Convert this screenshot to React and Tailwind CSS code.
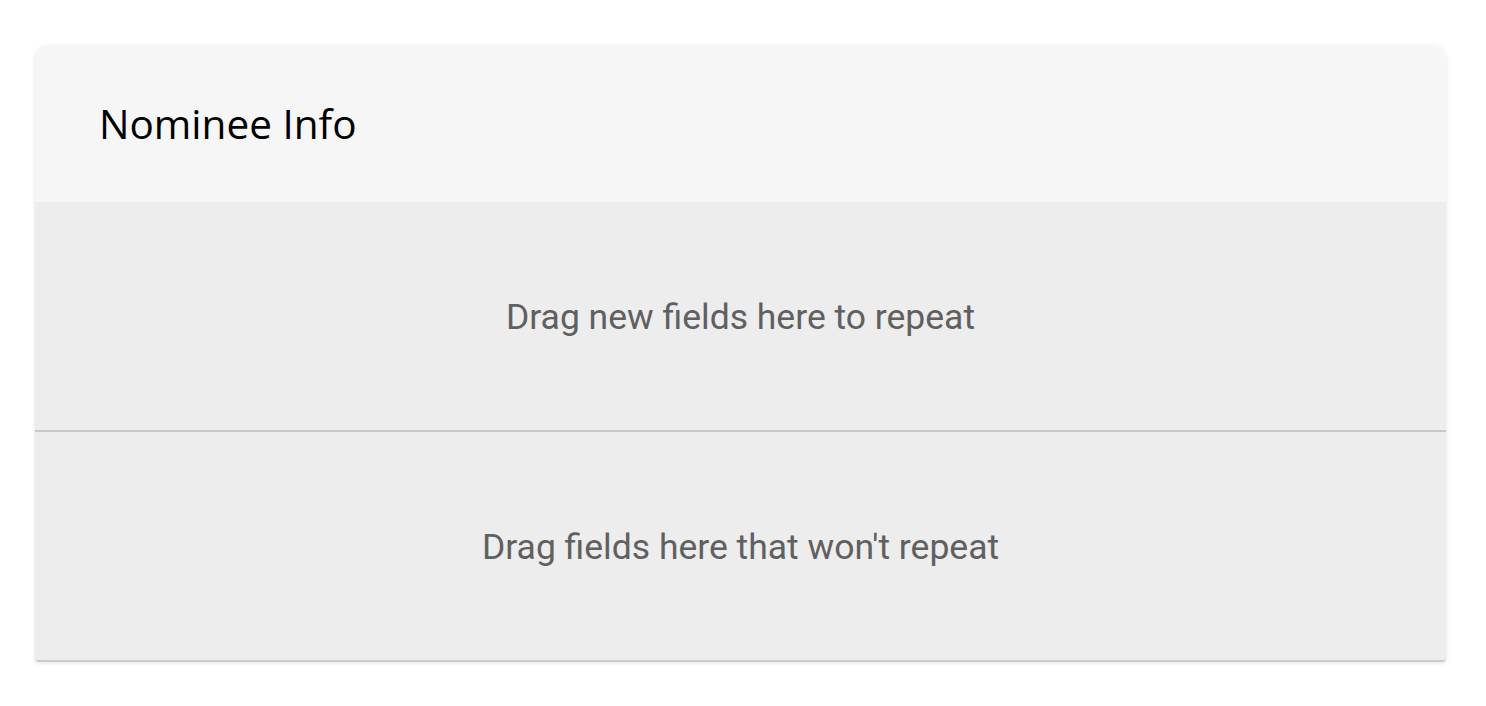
export default function App() {
  return (
    <div className="min-h-screen bg-white pt-[45px] pl-[35px] pr-[40px]">
      <div className="w-[1411px] rounded-t-[14px] rounded-b-[4px] overflow-hidden shadow-[0_1px_4px_rgba(0,0,0,0.12)] border-b-2 border-[#cbcbcb]">
        {/* Header */}
        <div className="h-[157px] bg-[#f6f6f6] flex items-center pl-[64px] pt-[2px]">
          <h2 className="text-[40.5px] text-black font-['Open_Sans',sans-serif] leading-none">Nominee Info</h2>
        </div>

        {/* Repeating section */}
        <div className="h-[230px] bg-[#ededed] flex items-center justify-center border-b-2 border-[#c9c9c9] pt-[3px]">
          <p className="text-[35.5px] text-[#606060] font-['Roboto',sans-serif]">Drag new fields here to repeat</p>
        </div>

        {/* Non-repeating section */}
        <div className="h-[228px] bg-[#ededed] flex items-center justify-center pt-[3px]">
          <p className="text-[35.5px] text-[#606060] font-['Roboto',sans-serif]">Drag fields here that won't repeat</p>
        </div>
      </div>
    </div>
  );
}
